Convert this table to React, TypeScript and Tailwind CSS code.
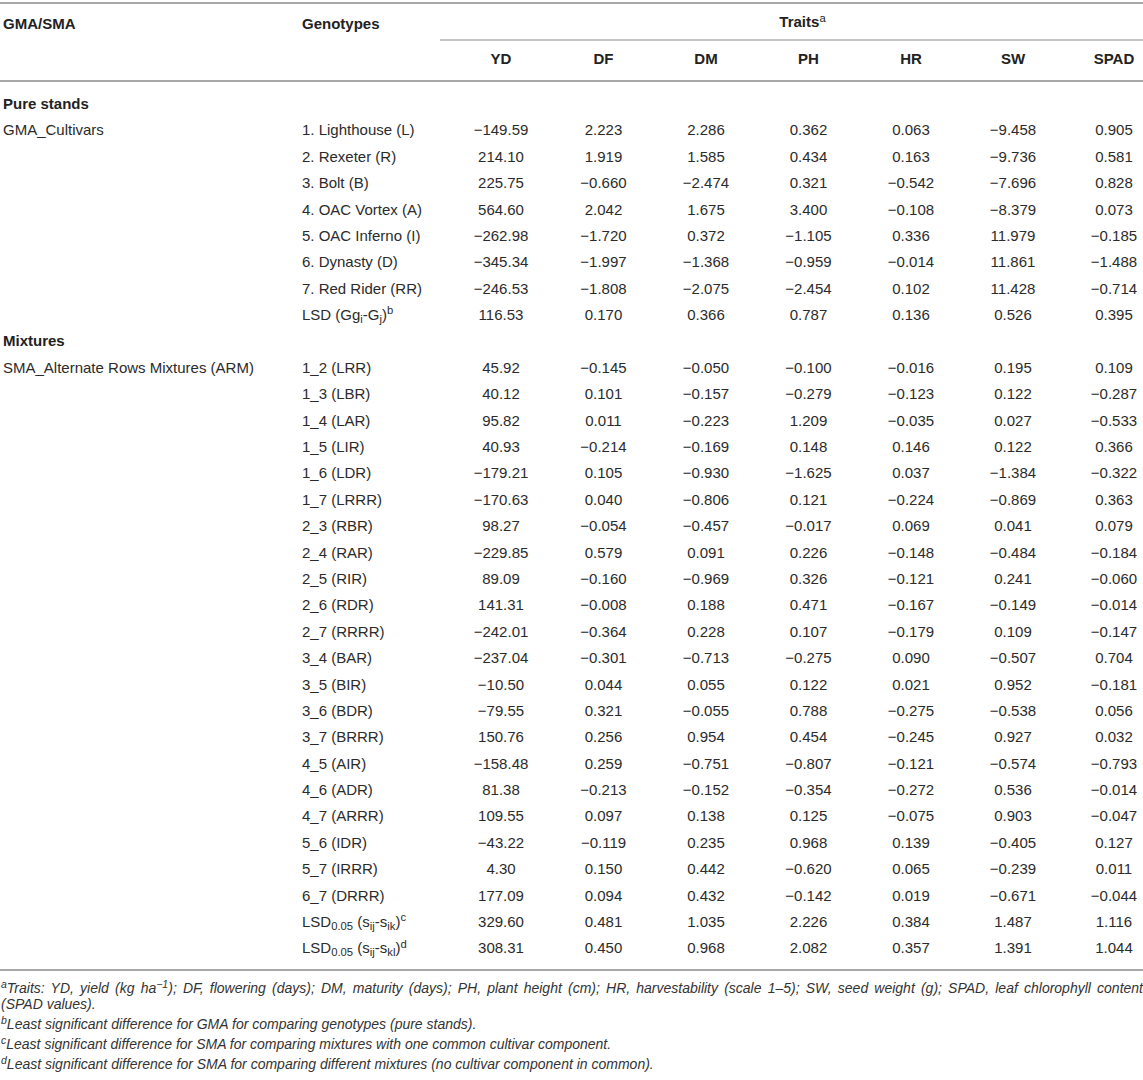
import React from "react";

type Row = { g: React.ReactNode; v: string[] };

const pure: Row[] = [
  { g: "1. Lighthouse (L)", v: ["−149.59", "2.223", "2.286", "0.362", "0.063", "−9.458", "0.905"] },
  { g: "2. Rexeter (R)", v: ["214.10", "1.919", "1.585", "0.434", "0.163", "−9.736", "0.581"] },
  { g: "3. Bolt (B)", v: ["225.75", "−0.660", "−2.474", "0.321", "−0.542", "−7.696", "0.828"] },
  { g: "4. OAC Vortex (A)", v: ["564.60", "2.042", "1.675", "3.400", "−0.108", "−8.379", "0.073"] },
  { g: "5. OAC Inferno (I)", v: ["−262.98", "−1.720", "0.372", "−1.105", "0.336", "11.979", "−0.185"] },
  { g: "6. Dynasty (D)", v: ["−345.34", "−1.997", "−1.368", "−0.959", "−0.014", "11.861", "−1.488"] },
  { g: "7. Red Rider (RR)", v: ["−246.53", "−1.808", "−2.075", "−2.454", "0.102", "11.428", "−0.714"] },
  {
    g: (
      <>
        LSD (Gg<sub>i</sub>-G<sub>j</sub>)<sup>b</sup>
      </>
    ),
    v: ["116.53", "0.170", "0.366", "0.787", "0.136", "0.526", "0.395"],
  },
];

const mix: Row[] = [
  { g: "1_2 (LRR)", v: ["45.92", "−0.145", "−0.050", "−0.100", "−0.016", "0.195", "0.109"] },
  { g: "1_3 (LBR)", v: ["40.12", "0.101", "−0.157", "−0.279", "−0.123", "0.122", "−0.287"] },
  { g: "1_4 (LAR)", v: ["95.82", "0.011", "−0.223", "1.209", "−0.035", "0.027", "−0.533"] },
  { g: "1_5 (LIR)", v: ["40.93", "−0.214", "−0.169", "0.148", "0.146", "0.122", "0.366"] },
  { g: "1_6 (LDR)", v: ["−179.21", "0.105", "−0.930", "−1.625", "0.037", "−1.384", "−0.322"] },
  { g: "1_7 (LRRR)", v: ["−170.63", "0.040", "−0.806", "0.121", "−0.224", "−0.869", "0.363"] },
  { g: "2_3 (RBR)", v: ["98.27", "−0.054", "−0.457", "−0.017", "0.069", "0.041", "0.079"] },
  { g: "2_4 (RAR)", v: ["−229.85", "0.579", "0.091", "0.226", "−0.148", "−0.484", "−0.184"] },
  { g: "2_5 (RIR)", v: ["89.09", "−0.160", "−0.969", "0.326", "−0.121", "0.241", "−0.060"] },
  { g: "2_6 (RDR)", v: ["141.31", "−0.008", "0.188", "0.471", "−0.167", "−0.149", "−0.014"] },
  { g: "2_7 (RRRR)", v: ["−242.01", "−0.364", "0.228", "0.107", "−0.179", "0.109", "−0.147"] },
  { g: "3_4 (BAR)", v: ["−237.04", "−0.301", "−0.713", "−0.275", "0.090", "−0.507", "0.704"] },
  { g: "3_5 (BIR)", v: ["−10.50", "0.044", "0.055", "0.122", "0.021", "0.952", "−0.181"] },
  { g: "3_6 (BDR)", v: ["−79.55", "0.321", "−0.055", "0.788", "−0.275", "−0.538", "0.056"] },
  { g: "3_7 (BRRR)", v: ["150.76", "0.256", "0.954", "0.454", "−0.245", "0.927", "0.032"] },
  { g: "4_5 (AIR)", v: ["−158.48", "0.259", "−0.751", "−0.807", "−0.121", "−0.574", "−0.793"] },
  { g: "4_6 (ADR)", v: ["81.38", "−0.213", "−0.152", "−0.354", "−0.272", "0.536", "−0.014"] },
  { g: "4_7 (ARRR)", v: ["109.55", "0.097", "0.138", "0.125", "−0.075", "0.903", "−0.047"] },
  { g: "5_6 (IDR)", v: ["−43.22", "−0.119", "0.235", "0.968", "0.139", "−0.405", "0.127"] },
  { g: "5_7 (IRRR)", v: ["4.30", "0.150", "0.442", "−0.620", "0.065", "−0.239", "0.011"] },
  { g: "6_7 (DRRR)", v: ["177.09", "0.094", "0.432", "−0.142", "0.019", "−0.671", "−0.044"] },
  {
    g: (
      <>
        LSD<sub>0.05</sub> (s<sub>ij</sub>-s<sub>ik</sub>)<sup>c</sup>
      </>
    ),
    v: ["329.60", "0.481", "1.035", "2.226", "0.384", "1.487", "1.116"],
  },
  {
    g: (
      <>
        LSD<sub>0.05</sub> (s<sub>ij</sub>-s<sub>kl</sub>)<sup>d</sup>
      </>
    ),
    v: ["308.31", "0.450", "0.968", "2.082", "0.357", "1.391", "1.044"],
  },
];

const cols = "grid grid-cols-[300px_150px_102px_103px_102px_103px_102px_102px_79px]";
const traits = ["YD", "DF", "DM", "PH", "HR", "SW", "SPAD"];

function DataRow({ first, row }: { first?: React.ReactNode; row: Row }) {
  return (
    <div className={`${cols} h-[26.4px] items-center`}>
      <div className="pl-[3px] whitespace-nowrap">{first}</div>
      <div className="pl-[2px] whitespace-nowrap">{row.g}</div>
      {row.v.map((x, i) => (
        <div key={i} className={`text-center whitespace-nowrap ${i === 6 ? "pl-[21px]" : ""}`}>
          {x}
        </div>
      ))}
    </div>
  );
}

function SectionRow({ label }: { label: string }) {
  return (
    <div className="h-[26.4px] flex items-center pl-[3px] font-bold text-[#222]">{label}</div>
  );
}

export default function App() {
  return (
    <div className="w-[1143px] bg-white text-[#2b2b2b] font-['Liberation_Sans',Arial,sans-serif] text-[15px] pt-[2px]">
      <div className="h-[2px] bg-[#a8a8a8]" />
      {/* Header */}
      <div className={`${cols} grid-rows-[37px_39px] font-bold text-[#222]`}>
        <div className="row-span-2 pl-[3px] pt-[11px] leading-[18px]">GMA/SMA</div>
        <div className="row-span-2 pl-[2px] pt-[11px] leading-[18px]">Genotypes</div>
        <div className="col-span-7 flex flex-col">
          <div className="flex-1 flex items-center justify-center pl-[12px] pt-[2px]">
            <span>
              Traits<sup className="font-normal">a</sup>
            </span>
          </div>
          <div className="ml-[-10px] h-[2px] bg-[#c4c4c4]" />
        </div>
        {traits.map((t, i) => (
          <div
            key={t}
            className={`flex items-center justify-center pb-[3px] ${i === 6 ? "pl-[21px]" : ""}`}
          >
            {t}
          </div>
        ))}
      </div>
      <div className="h-[2px] bg-[#a8a8a8]" />

      {/* Body */}
      <div className="pt-[9px] pb-[7px]">
        <SectionRow label="Pure stands" />
        {pure.map((r, i) => (
          <DataRow key={i} row={r} first={i === 0 ? "GMA_Cultivars" : null} />
        ))}
        <SectionRow label="Mixtures" />
        {mix.map((r, i) => (
          <DataRow key={i} row={r} first={i === 0 ? "SMA_Alternate Rows Mixtures (ARM)" : null} />
        ))}
      </div>
      <div className="h-[2px] bg-[#a8a8a8]" />

      {/* Footnotes */}
      <div className="pt-[9px] flex flex-col gap-[4px] text-[14px] italic leading-[16px] text-[#333]">
        <p className="text-justify pl-[1px]">
          <sup>a</sup>Traits: YD, yield (kg ha<sup>−1</sup>); DF, flowering (days); DM, maturity (days); PH, plant
          height (cm); HR, harvestability (scale 1–5); SW, seed weight (g); SPAD, leaf chlorophyll content
          (SPAD{"\u00A0"}values).
        </p>
        <p className="pl-[1px]">
          <sup>b</sup>Least significant difference for GMA for comparing genotypes (pure stands).
        </p>
        <p className="pl-[1px]">
          <sup>c</sup>Least significant difference for SMA for comparing mixtures with one common cultivar component.
        </p>
        <p className="pl-[1px]">
          <sup>d</sup>Least significant difference for SMA for comparing different mixtures (no cultivar component in
          common).
        </p>
      </div>
    </div>
  );
}
